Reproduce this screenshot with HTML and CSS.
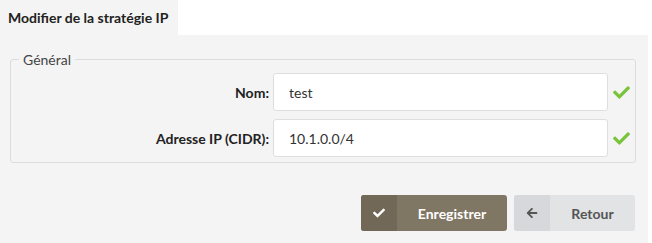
FILE: index.html
```html
<!DOCTYPE html>
<html lang="fr">

<head>
    <meta charset="UTF-8">
    <title>Modifier de la stratégie IP</title>
    <link rel="stylesheet" href="styles.css">
</head>

<body>
    <div class="tabs">
        <span class="tab active">Modifier de la stratégie IP</span>
    </div>
    <div class="panel">
        <fieldset class="group">
            <legend>Général</legend>
            <div class="row">
                <label class="label" for="nom">Nom:</label>
                <input class="field" id="nom" type="text" value="test">
                <span class="valid">
                    <svg viewBox="0 0 512 512"><path d="M173.9 439.4l-166.4-166.4c-10-10-10-26.2 0-36.2l36.2-36.2c10-10 26.2-10 36.2 0L192 312.7 432.1 72.6c10-10 26.2-10 36.2 0l36.2 36.2c10 10 10 26.2 0 36.2l-294.4 294.4c-10 10-26.2 10-36.2 0z"/></svg>
                </span>
            </div>
            <div class="row">
                <label class="label" for="ip">Adresse IP (CIDR):</label>
                <input class="field" id="ip" type="text" value="10.1.0.0/4">
                <span class="valid">
                    <svg viewBox="0 0 512 512"><path d="M173.9 439.4l-166.4-166.4c-10-10-10-26.2 0-36.2l36.2-36.2c10-10 26.2-10 36.2 0L192 312.7 432.1 72.6c10-10 26.2-10 36.2 0l36.2 36.2c10 10 10 26.2 0 36.2l-294.4 294.4c-10 10-26.2 10-36.2 0z"/></svg>
                </span>
            </div>
        </fieldset>
        <div class="actions">
            <button class="btn btn-save" type="button">
                <span class="btn-icon">
                    <svg viewBox="0 0 512 512"><path d="M173.9 439.4l-166.4-166.4c-10-10-10-26.2 0-36.2l36.2-36.2c10-10 26.2-10 36.2 0L192 312.7 432.1 72.6c10-10 26.2-10 36.2 0l36.2 36.2c10 10 10 26.2 0 36.2l-294.4 294.4c-10 10-26.2 10-36.2 0z"/></svg>
                </span>
                <span class="btn-text">Enregistrer</span>
            </button>
            <button class="btn btn-back" type="button">
                <span class="btn-icon">
                    <svg viewBox="0 0 448 512"><path d="M257.5 445.1l-22.2 22.2c-9.4 9.4-24.6 9.4-33.9 0L7 273c-9.4-9.4-9.4-24.6 0-33.9L201.4 44.7c9.4-9.4 24.6-9.4 33.9 0l22.2 22.2c9.5 9.5 9.3 25-.4 34.3L136.6 216H424c13.3 0 24 10.7 24 24v32c0 13.3-10.7 24-24 24H136.6l120.5 114.8c9.8 9.3 10 24.8.4 34.3z"/></svg>
                </span>
                <span class="btn-text">Retour</span>
            </button>
        </div>
    </div>
</body>

</html>
```

FILE: styles.css
```css
body {
    margin: 0;
    background: #fff;
    font-family: Lato, "Liberation Sans", sans-serif;
    font-size: 14px;
    color: #333;
}

div.tabs {
    display: flex;
    height: 35px;
    background: #fff;
}

span.tab {
    display: flex;
    align-items: center;
    padding: 0 10px 0 8px;
    font-weight: bold;
    color: #222;
}

span.tab.active {
    background: #f4f4f4;
}

div.panel {
    width: 648px;
    height: 208px;
    box-sizing: border-box;
    padding: 16px 12px 0 10px;
    background: #f4f4f4;
}

fieldset.group {
    margin: 0;
    padding: 5px 0 5px 0;
    border: 1px solid #dcdcdc;
    border-radius: 3px;
}

fieldset.group legend {
    margin-left: 8px;
    padding: 0 4px;
    color: #444;
    font-size: 14px;
}

div.row {
    display: flex;
    align-items: center;
    margin-bottom: 8px;
}

div.row:last-child {
    margin-bottom: 0;
}

label.label {
    flex: 1;
    text-align: right;
    font-weight: bold;
    color: #222;
    padding-right: 4px;
}

input.field {
    width: 335px;
    height: 38px;
    box-sizing: border-box;
    padding: 0 15px;
    border: 1px solid #dedede;
    border-radius: 3px;
    background: #fff;
    font-family: Lato, "Liberation Sans", sans-serif;
    font-size: 14px;
    color: #333;
    outline: none;
}

span.valid {
    width: 27px;
    display: flex;
    justify-content: center;
}

span.valid svg {
    width: 17px;
    height: 17px;
    fill: #79c43c;
}

div.actions {
    display: flex;
    justify-content: flex-end;
    gap: 7px;
    margin-top: 32px;
    padding-right: 1px;
}

button.btn {
    display: flex;
    height: 36px;
    padding: 0;
    border: none;
    border-radius: 3px;
    overflow: hidden;
    font-family: Lato, "Liberation Sans", sans-serif;
    font-size: 14px;
    font-weight: bold;
    cursor: pointer;
}

span.btn-icon {
    width: 36px;
    display: flex;
    align-items: center;
    justify-content: center;
}

span.btn-icon svg {
    width: 12px;
    height: 12px;
}

span.btn-text {
    flex: 1;
    display: flex;
    align-items: center;
    justify-content: center;
}

button.btn-save {
    width: 146px;
    background: #807664;
    color: #fff;
}

button.btn-save span.btn-icon {
    background: #716858;
}

button.btn-save svg {
    fill: #fff;
}

button.btn-back {
    width: 121px;
    background: #e1e3e5;
    color: #555;
}

button.btn-back span.btn-icon {
    background: #d6d8db;
}

button.btn-back svg {
    fill: #555;
}
```
